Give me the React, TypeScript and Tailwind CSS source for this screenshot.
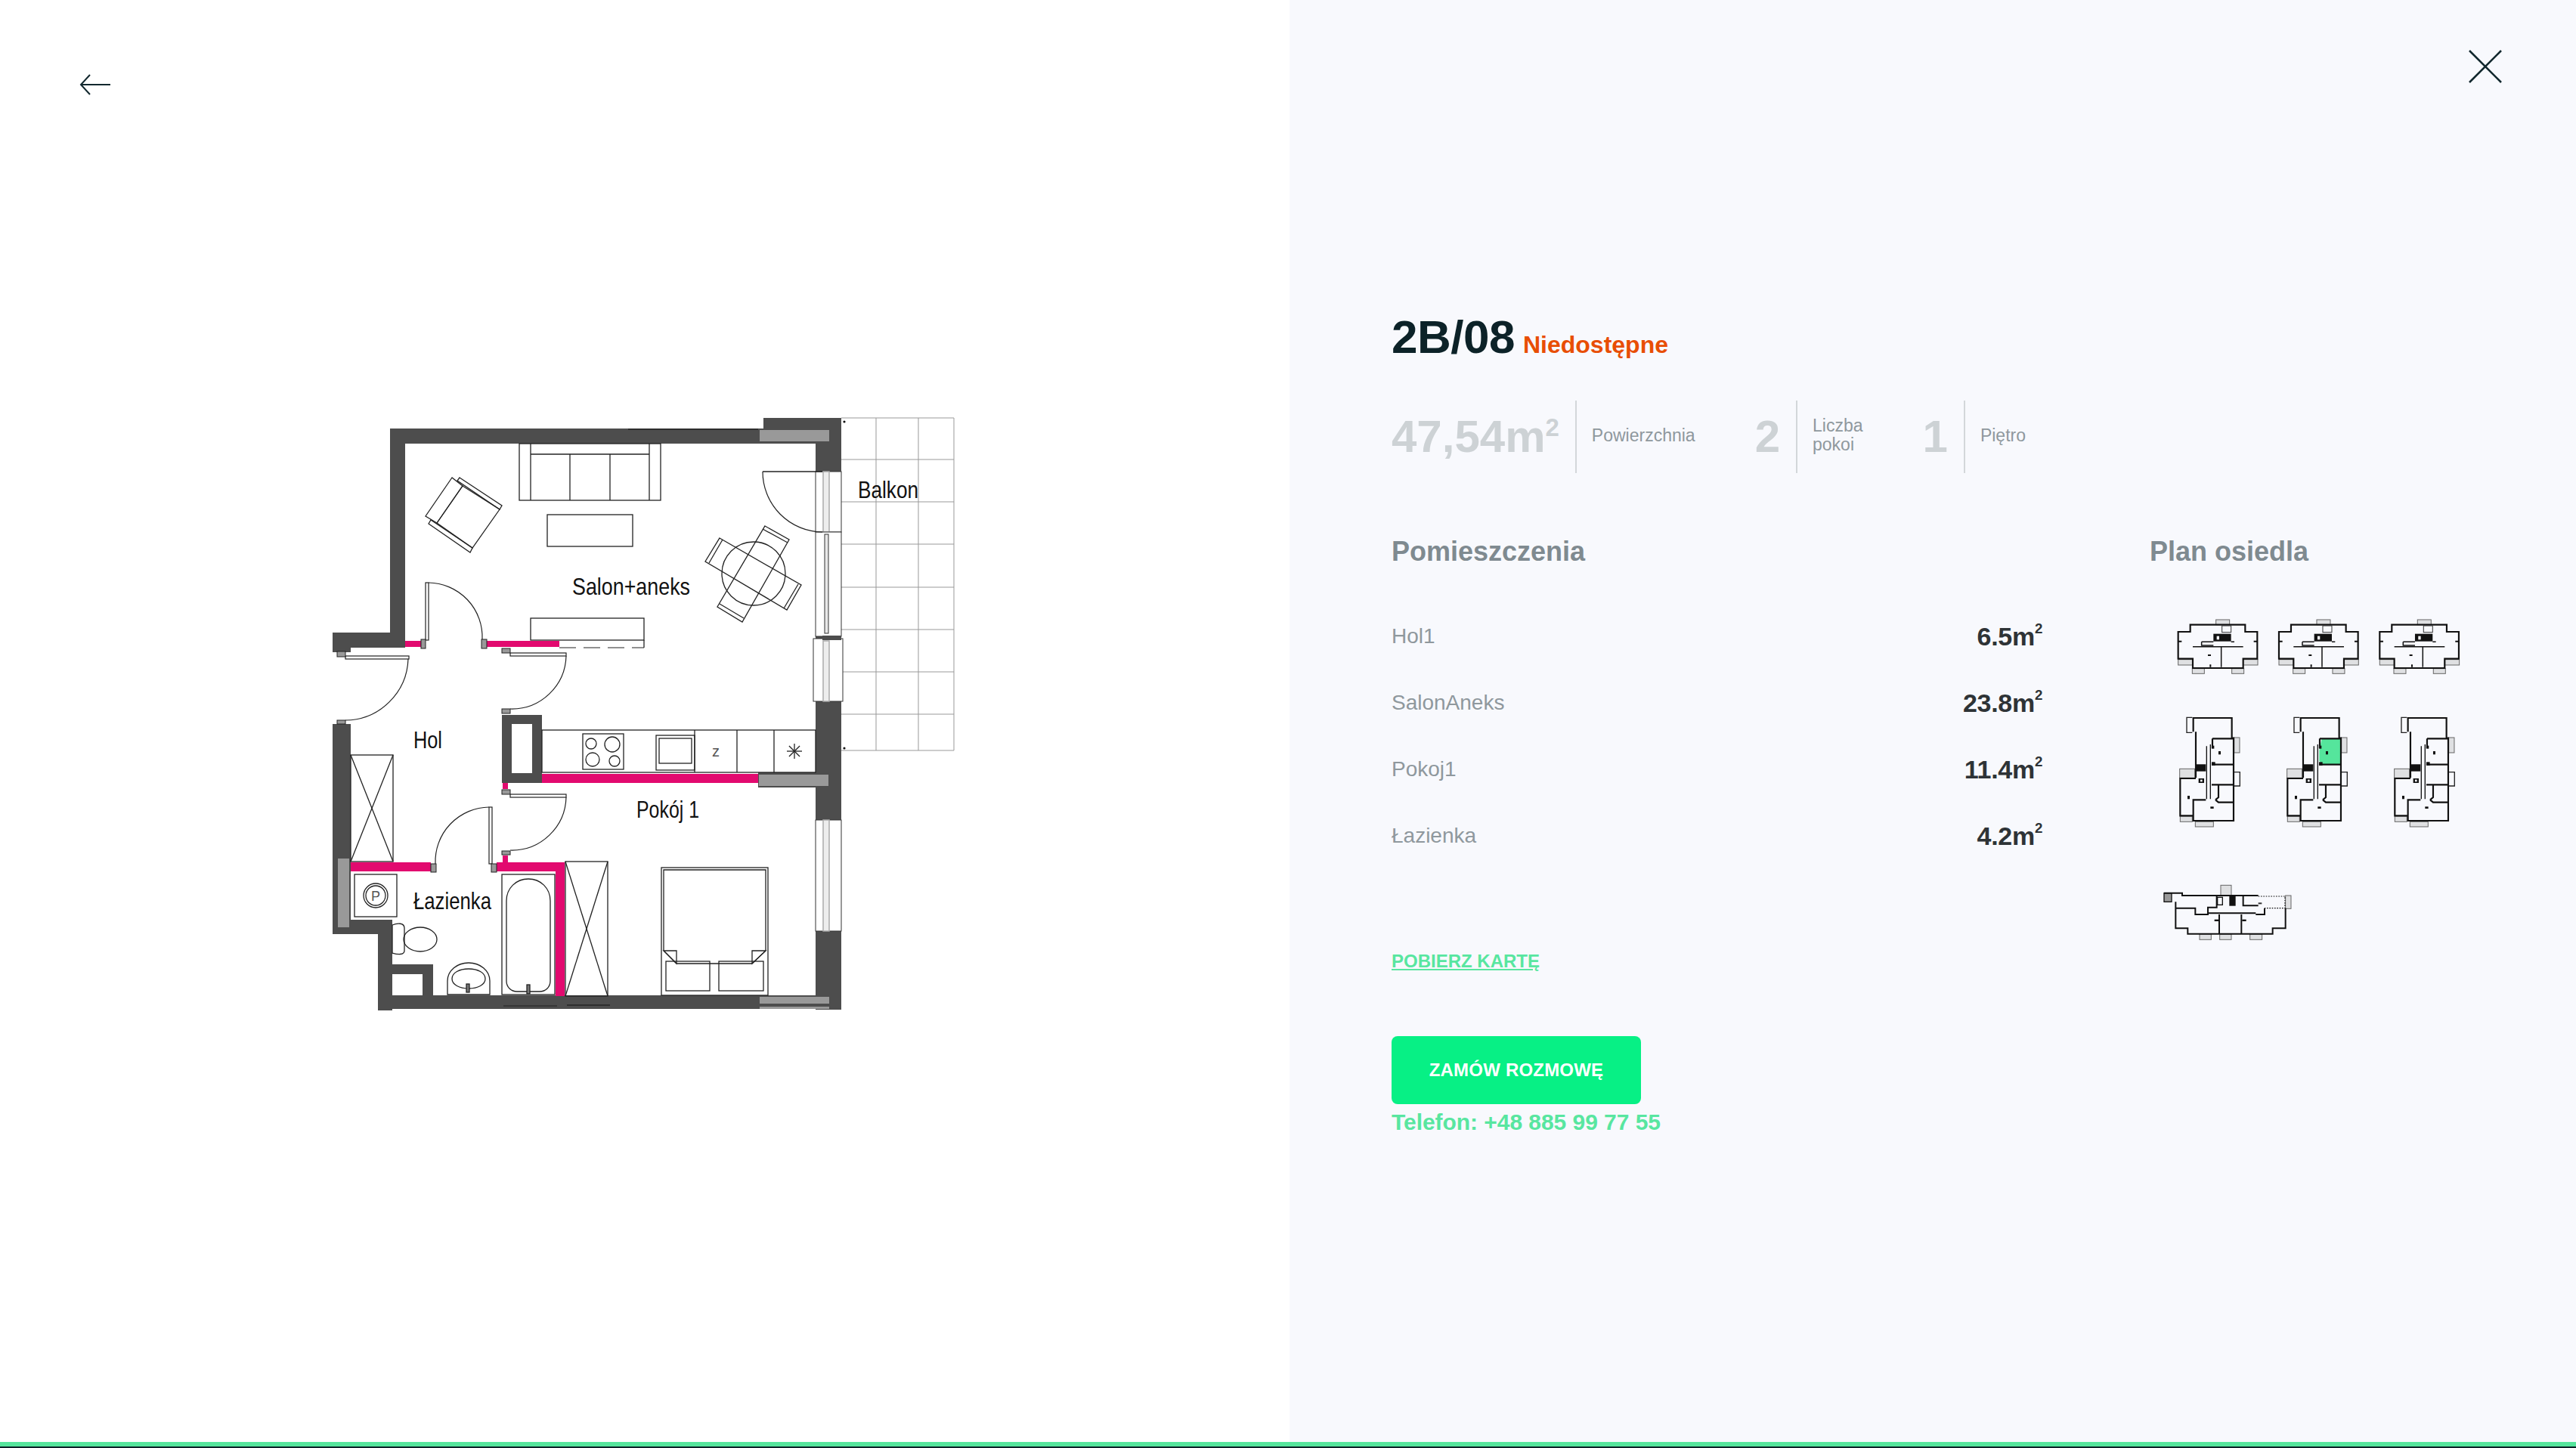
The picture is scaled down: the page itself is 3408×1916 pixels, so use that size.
const rooms = [
  { name: "Hol1", area: "6.5" },
  { name: "SalonAneks", area: "23.8" },
  { name: "Pokoj1", area: "11.4" },
  { name: "Łazienka", area: "4.2" },
];

const WALL = "#4d4d4d";
const PINK = "#e20a6f";
const GREY = "#999999";

type Box = [number, number, number, number];

const walls: Box[] = [
  [516, 567, 563, 20],
  [1010, 553, 103, 34],
  [1079, 553, 34, 783],
  [516, 567, 20, 290],
  [440, 837, 96, 20],
  [440, 837, 24, 26],
  [440, 958, 24, 278],
  [440, 1217, 79, 19],
  [500, 1217, 19, 120],
  [500, 1317, 613, 18],
  [519, 1276, 54, 13],
  [559, 1276, 14, 41],
  [664, 946, 53, 90],
  [1003, 1022, 76, 20],
];

const pink: Box[] = [
  [536, 848, 21, 8],
  [644, 848, 96, 8],
  [464, 1141, 106, 12],
  [657, 1141, 90, 12],
  [735, 1141, 12, 177],
  [717, 1024, 286, 12],
  [665, 1036, 7, 8],
  [665, 1132, 7, 9],
];

const greys: Box[] = [
  [1005, 569, 92, 15],
  [447, 1136, 15, 91],
  [1004, 1025, 92, 15],
  [1005, 1319, 92, 9],
  [1005, 1332, 92, 3],
];

const jambs: Box[] = [
  [557, 846, 6, 12],
  [637, 846, 7, 12],
  [446, 862, 11, 7],
  [446, 953, 11, 5],
  [664, 858, 11, 6],
  [664, 938, 11, 6],
  [664, 1045, 11, 6],
  [664, 1126, 11, 5],
  [570, 1143, 7, 11],
  [650, 1143, 7, 11],
];

const outlines: Box[] = [
  [687, 587, 187, 75],
  [724, 681, 113, 42],
  [702, 818, 150, 29],
  [717, 966, 362, 56],
  [771, 971, 54, 47],
  [868, 973, 51, 46],
  [872, 977, 43, 33],
  [469, 1157, 56, 56],
  [664, 1157, 70, 159],
  [875, 1148, 141, 169],
  [881, 1272, 58, 39],
  [951, 1272, 59, 39],
  [464, 999, 56, 141],
  [748, 1140, 56, 178],
];

const lines: Box[] = [
  [702, 587, 702, 662],
  [859, 587, 859, 662],
  [702, 601, 859, 601],
  [754, 601, 754, 662],
  [807, 601, 807, 662],
  [919, 966, 919, 1022],
  [975, 966, 975, 1022],
  [1024, 966, 1024, 1022],
  [1009, 624, 1088, 624],
  [464, 999, 520, 1140],
  [520, 999, 464, 1140],
  [748, 1140, 804, 1318],
  [804, 1140, 748, 1318],
  [852, 847, 852, 857],
];

const polys = [
  "598,632 563,683 578,692 612,643",
  "608,632 664,669 661,674 605,636",
  "567,693 622,731 625,725 570,688",
  "612,643 661,674 625,725 578,692",
  "952,712 1060,774 1041,807 933,743",
  "1012,696 1044,714 982,823 949,803",
  "878,1151 1013,1151 1013,1258 995,1275 895,1275 878,1258",
  "878,1258 895,1258 895,1275",
  "1013,1258 995,1258 995,1275",
];

const labels = [
  { text: "Salon+aneks", x: 757, y: 787, w: 156 },
  { text: "Balkon", x: 1135, y: 659, w: 80 },
  { text: "Hol", x: 547, y: 990, w: 38 },
  { text: "Łazienka", x: 547, y: 1203, w: 103 },
  { text: "Pokój 1", x: 842, y: 1082, w: 83 },
];

function Door({ leaf, arc }: { leaf: Box; arc: string }) {
  return (
    <>
      <rect x={leaf[0]} y={leaf[1]} width={leaf[2]} height={leaf[3]} fill="#fff" stroke="#222" strokeWidth="1.2" />
      <path d={arc} fill="none" stroke="#222" strokeWidth="1.2" />
    </>
  );
}

function WindowStrip({ y, h }: { y: number; h: number }) {
  return (
    <>
      <rect x={1079} y={y} width={34} height={h} fill="#fff" stroke="#333" strokeWidth="1" />
      <rect x={1089} y={y} width={8} height={h} fill="#ededed" stroke="#aaaaaa" strokeWidth="1.5" />
    </>
  );
}

function FloorPlan() {
  return (
    <svg viewBox="426 545 854 818" className="h-[818px] w-[854px] font-['Liberation_Sans',sans-serif]">
      {/* balcony tiles */}
      <g stroke={GREY} strokeWidth="1" fill="none">
        {[553, 608, 664, 720, 777, 833, 889, 945, 993].map((y) => (
          <line key={y} x1={1113} y1={y} x2={1262} y2={y} />
        ))}
        {[1159, 1215, 1262].map((x) => (
          <line key={x} x1={x} y1={553} x2={x} y2={993} />
        ))}
      </g>
      <circle cx={1117} cy={558} r={1.6} fill="#111" />
      <circle cx={1117} cy={990} r={1.6} fill="#111" />

      {walls.map(([x, y, w, h], i) => (
        <rect key={i} x={x} y={y} width={w} height={h} fill={WALL} />
      ))}
      <rect x={677} y={958} width={27} height={65} fill="#fff" />
      <rect x={519} y={1289} width={40} height={28} fill="#fff" />
      {pink.map(([x, y, w, h], i) => (
        <rect key={i} x={x} y={y} width={w} height={h} fill={PINK} />
      ))}
      {greys.map(([x, y, w, h], i) => (
        <rect key={i} x={x} y={y} width={w} height={h} fill={GREY} />
      ))}
      <line x1={831} y1={568} x2={1003} y2={568} stroke="#111" strokeWidth="1.2" />
      <line x1={666} y1={1331} x2={737} y2={1331} stroke="#222" strokeWidth="1" />
      <line x1={750} y1={1330} x2={807} y2={1330} stroke="#111" strokeWidth="1.2" />

      {/* windows and balcony door */}
      <WindowStrip y={624} h={80} />
      <rect x={1079} y={704} width={34} height={138} fill="#fff" stroke="#333" strokeWidth="1" />
      <rect x={1091} y={707} width={5} height={131} fill="#e8e8e8" stroke="#333" strokeWidth="1" />
      <rect x={1076} y={845} width={39} height={83} fill="#fff" stroke="#333" strokeWidth="1" />
      <rect x={1089} y={848} width={8} height={80} fill="#ededed" stroke="#aaaaaa" strokeWidth="1.5" />
      <rect x={1088} y={841} width={25} height={6} fill={WALL} />
      <WindowStrip y={1085} h={147} />

      <g fill="none" stroke="#222" strokeWidth="1.3">
        {outlines.map(([x, y, w, h], i) => (
          <rect key={i} x={x} y={y} width={w} height={h} />
        ))}
        {lines.map(([x1, y1, x2, y2], i) => (
          <line key={i} x1={x1} y1={y1} x2={x2} y2={y2} />
        ))}
        {polys.map((p, i) => (
          <polygon key={i} points={p} />
        ))}
        <line x1={956} y1={714} x2={938} y2={745} />
        <line x1={1056} y1={773} x2={1037} y2={805} />
        <line x1={1009} y1={700} x2={1042} y2={718} />
        <line x1={952} y1={799} x2={984} y2={818} />
        <circle cx={997} cy={759} r={42} />
        <line x1={740} y1={857} x2={852} y2={857} strokeDasharray="22 10" strokeWidth="1" />
        {/* cooktop */}
        <circle cx={782} cy={984} r={7} />
        <circle cx={810} cy={985} r={10} />
        <circle cx={784} cy={1005} r={9} />
        <circle cx={813} cy={1007} r={7} />
        {/* boiler */}
        <circle cx={497} cy={1185} r={16} />
        <circle cx={497} cy={1185} r={13} />
        {/* toilet */}
        <path d="M519,1224 C526,1221 535,1221 535,1228 V1258 C535,1264 526,1263 519,1261 Z" />
        <ellipse cx={556} cy={1243} rx={22} ry={16} />
        {/* basin */}
        <path d="M592,1316 V1298 C592,1284 605,1274 620,1274 C635,1274 648,1284 648,1298 V1316 Z" />
        <path d="M598,1295 C598,1287 608,1282 620,1282 C632,1282 642,1287 642,1295 C642,1303 632,1308 620,1308 C608,1308 598,1303 598,1295 Z" />
        <rect x={617} y={1302} width={4} height={11} fill="#777" />
        {/* bath */}
        <path d="M670,1192 C670,1175 683,1163 699,1163 C715,1163 728,1175 728,1192 V1298 C728,1306 722,1312 714,1312 H684 C676,1312 670,1306 670,1298 Z" />
        <rect x={697} y={1303} width={4} height={12} fill="#777" />
        {/* fridge star */}
        {[0, 45, 90, 135].map((a) => (
          <line key={a} x1={1041} y1={994} x2={1061} y2={994} transform={`rotate(${a} 1051 994)`} />
        ))}
      </g>

      <Door leaf={[563, 771, 4, 76]} arc="M567,771 A72,72 0 0 1 638,846" />
      <Door leaf={[457, 868, 84, 4]} arc="M540,872 A84,84 0 0 1 457,953" />
      <Door leaf={[675, 864, 74, 4]} arc="M749,868 A72,72 0 0 1 675,938" />
      <Door leaf={[675, 1051, 74, 4]} arc="M749,1055 A72,72 0 0 1 675,1125" />
      <Door leaf={[647, 1068, 4, 75]} arc="M647,1068 A72,72 0 0 0 576,1143" />
      <path d="M1009,624 A80,80 0 0 0 1088,704" fill="none" stroke="#222" strokeWidth="1.2" />
      {jambs.map(([x, y, w, h], i) => (
        <rect key={i} x={x} y={y} width={w} height={h} fill={GREY} stroke="#222" strokeWidth="1" />
      ))}

      <text x={497} y={1192} fontSize="18" textAnchor="middle" fill="#555">P</text>
      <text x={947} y={1001} fontSize="20" textAnchor="middle" fill="#555">z</text>
      {labels.map((l) => (
        <text key={l.text} x={l.x} y={l.y} fontSize="32" fill="#111" textLength={l.w} lengthAdjust="spacingAndGlyphs">
          {l.text}
        </text>
      ))}
    </svg>
  );
}

function WingH({ dx }: { dx: number }) {
  return (
    <g transform={`translate(${dx} 0)`}>
      <g fill="#dfe0e2" stroke="#666" strokeWidth="3">
        <rect x={272} y={90} width={54} height={20} />
        <rect x={122} y={248} width={58} height={22} />
        <rect x={380} y={248} width={58} height={22} />
        <rect x={178} y={284} width={48} height={20} />
        <rect x={335} y={284} width={48} height={20} />
      </g>
      <path d="M122,138 H170 V110 H388 V138 H436 V245 H380 V282 H180 V245 H122 Z" fill="none" stroke="#111" strokeWidth="6.5" />
      <path d="M180,197 H380 M293,197 V278 M215,178 H262 M215,178 V192 H262 M332,178 H345" fill="none" stroke="#111" strokeWidth="4.5" />
      <rect x={262} y={146} width={70} height={30} fill="#111" />
      <rect x={275} y={155} width={10} height={14} fill="#f8f9fd" />
      <rect x={296} y={114} width={36} height={26} fill="#f8f9fd" stroke="#333" strokeWidth="3" />
      <rect x={240} y={228} width={12} height={6} fill="#111" />
      <path d="M250,268 V278 M122,176 H136 M422,176 H436" stroke="#111" strokeWidth="6" />
    </g>
  );
}

function WingV({ dx, active }: { dx: number; active?: boolean }) {
  return (
    <g transform={`translate(${dx} 0)`}>
      {active && <path d="M266,562 H340 V664 H266 L256,650 V610 Z" fill="#55e59c" />}
      <g fill="#dfe0e2" stroke="#666" strokeWidth="3">
        <rect x={128} y={682} width={60} height={36} />
        <rect x={130} y={870} width={48} height={22} />
        <rect x={190} y={892} width={72} height={20} />
        <rect x={344} y={558} width={22} height={60} />
      </g>
      <path d="M345,695 H367 V750 H345 M178,478 H156 V538 H178" fill="none" stroke="#222" strokeWidth="4" />
      <path
        d="M182,535 V480 H335 V560 H342 V888 H182 V868 H130 V720 H192 M192,535 V640 M182,888 V805 H232 M270,805 L282,815 H342 M258,562 H342 M258,562 V600 M255,665 H342 M255,745 H342 M282,745 V795 L270,805 M192,640 V718"
        fill="none"
        stroke="#111"
        strokeWidth="6.5"
      />
      <path d="M235,592 V802 M250,585 V802" fill="none" stroke="#111" strokeWidth="4" />
      <rect x={192} y={664} width={40} height={28} fill="#111" />
      <rect x={203} y={720} width={22} height={18} fill="#111" />
      <rect x={210} y={725} width={8} height={8} fill="#f8f9fd" />
      <rect x={282} y={612} width={9} height={13} fill="#111" />
      <rect x={159} y={789} width={9} height={13} fill="#111" />
      <rect x={250} y={832} width={13} height={8} fill="#111" />
      <rect x={255} y={590} width={10} height={12} fill="#111" />
      <rect x={255} y={655} width={14} height={14} fill="#111" />
    </g>
  );
}

function SitePlan() {
  return (
    <svg viewBox="2843 800 430 460" className="mt-[48px] h-[460px] w-[430px]">
      <g transform="translate(2840 790) scale(0.3333)">
        {[0, 400, 800].map((dx) => (
          <WingH key={dx} dx={dx} />
        ))}
        <WingV dx={0} />
        <WingV dx={426} active />
        <WingV dx={852} />
      </g>
      <g transform="translate(2840 1130) scale(0.3333)">
        <g fill="#dfe0e2" stroke="#666" strokeWidth="3">
          <rect x={291} y={124} width={42} height={40} />
          <rect x={548} y={165} width={22} height={52} />
          <rect x={207} y={318} width={46} height={22} />
          <rect x={287} y={318} width={46} height={22} />
          <rect x={407} y={318} width={48} height={22} />
        </g>
        <rect x={66} y={155} width={30} height={35} fill="#999" stroke="#111" strokeWidth="4" />
        <path
          d="M66,155 H138 V165 H440 M275,165 V212 L240,212 V240 H190 V215 H112 M112,190 V295 H160 V317 H497 V295 H548 V215 M465,215 V240 H430 M285,240 V317 M373,240 V317 M240,235 H430 M380,165 V205 H440"
          fill="none"
          stroke="#111"
          strokeWidth="6"
        />
        <path d="M440,168 H546 V215 H465" fill="none" stroke="#111" strokeWidth="3.5" strokeDasharray="5 5" />
        <rect x={325} y={168} width={25} height={38} fill="#111" />
        <rect x={278} y={172} width={20} height={30} fill="#f8f9fd" stroke="#111" strokeWidth="4" />
        <rect x={266} y={260} width={16} height={7} fill="#111" />
        <rect x={376} y={260} width={16} height={7} fill="#111" />
        <rect x={440} y={193} width={14} height={6} fill="#333" />
      </g>
    </svg>
  );
}

function Stat({ value, label, sup }: { value: string; label: React.ReactNode; sup?: boolean }) {
  return (
    <div className="flex h-[96px] items-center">
      <span className="text-[60px] leading-[60px] font-bold text-[#cdd2d5]">
        {value}
        {sup && <sup className="relative -top-[0.65em] align-baseline text-[0.55em] font-bold">2</sup>}
      </span>
      <div className="ml-[21px] flex h-[96px] items-center border-l-2 border-[#d3d7da] pb-[4px] pl-[20px] text-[23px] leading-[25px] text-[#8f989d]">
        {label}
      </div>
    </div>
  );
}

export default function App() {
  return (
    <div className="flex h-[1916px] w-full flex-col overflow-hidden bg-white font-['Liberation_Sans',Arial,sans-serif]">
      <div className="flex min-h-0 flex-1">
        <div className="relative flex w-[1706px] items-center justify-center bg-white">
          <svg viewBox="0 0 52 30" className="absolute top-[97px] left-[101px] h-[30px] w-[52px]" fill="none" stroke="#12282e" strokeWidth="2">
            <path d="M6,15 H45 M18,2 L6,15 L18,28" />
          </svg>
          <FloorPlan />
        </div>
        <div className="relative flex-1 bg-[#f8f9fd] pt-[410px] pl-[135px]">
          <svg viewBox="0 0 46 46" className="absolute top-[65px] right-[97px] h-[46px] w-[46px]" stroke="#12282e" strokeWidth="2.6">
            <path d="M2,2 L44,44 M44,2 L2,44" />
          </svg>

          <div className="flex items-baseline leading-[72px]">
            <span className="text-[62px] font-bold tracking-[-0.5px] text-[#0c2228]">2B/08</span>
            <span className="ml-[11px] text-[32px] font-bold text-[#e84e04]">Niedostępne</span>
          </div>

          <div className="mt-[38px] flex gap-[79px]">
            <Stat value="47,54m" sup label="Powierzchnia" />
            <Stat
              value="2"
              label={
                <span>
                  Liczba
                  <br />
                  pokoi
                </span>
              }
            />
            <Stat value="1" label="Piętro" />
          </div>

          <div className="mt-[82px] flex gap-[142px]">
            <div className="w-[861px]">
              <h2 className="text-[36px] leading-[44px] font-bold text-[#7f8a90]">Pomieszczenia</h2>
              <div className="mt-[46px]">
                {rooms.map((room) => (
                  <div key={room.name} className="flex h-[88px] items-center justify-between">
                    <span className="text-[28px] text-[#8f989d]">{room.name}</span>
                    <span className="text-[34px] font-bold tracking-[-0.3px] text-[#2e3336]">
                      {room.area}m
                      <sup className="relative -top-[0.85em] align-baseline text-[0.55em]">2</sup>
                    </span>
                  </div>
                ))}
              </div>
              <a className="mt-[106px] block text-[24px] leading-[32px] font-bold text-[#58e6a0] underline">
                POBIERZ KARTĘ
              </a>
              <button className="mt-[83px] block h-[90px] w-[330px] rounded-[8px] bg-[#07f085] text-[24px] font-bold tracking-[0.2px] text-white">
                ZAMÓW ROZMOWĘ
              </button>
              <p className="mt-[6px] text-[30px] leading-[36px] font-bold tracking-[-0.05px] whitespace-nowrap text-[#58e6a0]">
                Telefon: +48 885 99 77 55
              </p>
            </div>
            <div>
              <h2 className="text-[36px] leading-[44px] font-bold text-[#7f8a90]">Plan osiedla</h2>
              <SitePlan />
            </div>
          </div>
        </div>
      </div>
      <div className="h-[6px] bg-[#55e59c]" />
      <div className="h-[2px] bg-[#0c2228]" />
    </div>
  );
}
